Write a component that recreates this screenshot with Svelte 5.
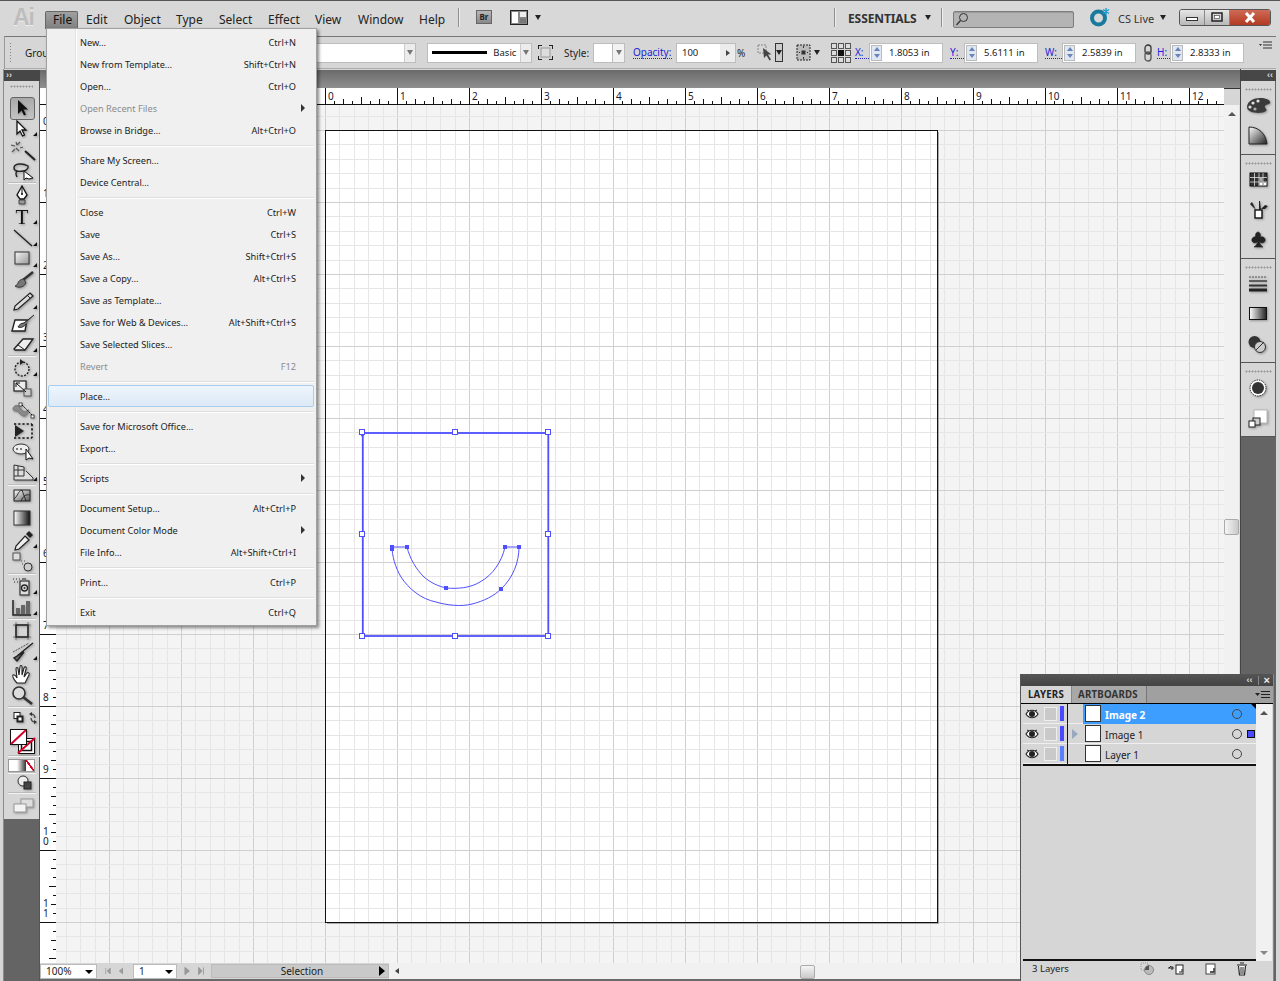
<script>
  const menuItems = [
    ['New…','Ctrl+N'],['New from Template…','Shift+Ctrl+N'],['Open…','Ctrl+O'],['Open Recent Files','',{dis:1,sub:1}],['Browse in Bridge…','Alt+Ctrl+O'],null,
    ['Share My Screen…',''],['Device Central…',''],null,
    ['Close','Ctrl+W'],['Save','Ctrl+S'],['Save As…','Shift+Ctrl+S'],['Save a Copy…','Alt+Ctrl+S'],['Save as Template…',''],['Save for Web & Devices…','Alt+Shift+Ctrl+S'],['Save Selected Slices…',''],['Revert','F12',{dis:1}],null,
    ['Place…','',{hl:1}],null,
    ['Save for Microsoft Office…',''],['Export…',''],null,
    ['Scripts','',{sub:1}],null,
    ['Document Setup…','Alt+Ctrl+P'],['Document Color Mode','',{sub:1}],['File Info…','Alt+Shift+Ctrl+I'],null,
    ['Print…','Ctrl+P'],null,
    ['Exit','Ctrl+Q']
  ];
  const menus = [['File',33],['Edit',38],['Object',52],['Type',43],['Select',49],['Effect',47],['View',43],['Window',61],['Help',41]];

  const tri = '<path d="M29 18h4v-4z" fill="#111"/>';
  const groups = [
    { cls:'g0', tools:[
      '<path d="M14 3v14l3.5-3.5 2.5 5 2-1-2.5-5H24z" fill="#111"/>',
      '<path d="M13 3v13l3-3 2.5 5 2-1-2.5-5H22z" fill="#fff" stroke="#111" stroke-width="1.3"/>'+tri,
      '<path d="M21 11l10 9" stroke="#222" stroke-width="2"/><path d="M12 2l1 3M19 7l-3 1M11 9l-3 3M7 5l4 1M16 2l-3 3M15 11l-3-3" stroke="#555" stroke-width="1.2"/>',
      '<path d="M24 5c-5-3-14-3-14 2 0 3 4 4 9 3 2 0 6-2 5-5zM13 10c-2 2-1 4 0 6" fill="none" stroke="#222" stroke-width="1.4"/><path d="M20 10v9l2-2 3 1 4-1z" fill="#fff" stroke="#111"/>'
    ]},
    { cls:'g1', tools:[
      '<path d="M18 1l5 9-3 4h-4l-3-4z" fill="#fff" stroke="#111" stroke-width="1.3"/><path d="M18 1v8" stroke="#111"/><circle cx="18" cy="9" r="1" fill="#111"/><path d="M15 15h6v4h-6z" fill="#999" stroke="#333" stroke-width=".8"/>',
      '<text x="18" y="18" text-anchor="middle" font-family="Liberation Serif" font-size="21" fill="#111">T</text>'+tri,
      '<path d="M10 2l18 16" stroke="#222" stroke-width="1.4"/>'+tri,
      '<defs><linearGradient id="rg" x1="0" y1="0" x2="1" y2="1"><stop offset="0" stop-color="#f5f5f5"/><stop offset="1" stop-color="#999"/></linearGradient></defs><rect x="11" y="3" width="14" height="12" fill="url(#rg)" stroke="#333"/>'+tri,
      '<path d="M29 2L19 10" stroke="#333" stroke-width="2.4"/><path d="M20 9c-4 0-6 3-6 4s-2 3-3 3c3 2 8 2 11-3z" fill="#777" stroke="#222" stroke-width=".8"/>',
      '<path d="M26 2l3 3-15 13-4 1 1-4z" fill="#ddd" stroke="#222" stroke-width="1.2"/><path d="M23 4l3 3" stroke="#222"/>'+tri,
      '<path d="M11 7h12l-2 11H8z" fill="#fff" stroke="#222" stroke-width="1.4"/><path d="M30 2L20 10c-3 0-5 2-6 4 3 1 6 0 8-3" fill="#777" stroke="#222"/>',
      '<path d="M10 15l9-10h10l-8 11H11z" fill="#eee" stroke="#222" stroke-width="1.3"/><path d="M14 11l7 5" stroke="#222"/>'+tri
    ]},
    { cls:'g2', tools:[
      '<circle cx="18" cy="11" r="7" fill="none" stroke="#222" stroke-width="1.4" stroke-dasharray="2 1.4"/><path d="M16 1l4 3-4 3z" fill="#222"/>'+tri,
      '<rect x="10" y="2" width="12" height="10" fill="#eee" stroke="#222" stroke-width="1.2"/><rect x="20" y="10" width="7" height="7" fill="#ccc" stroke="#555"/><path d="M12 4l10 9M12 4h4M12 4v4" stroke="#111" fill="none"/>',
      '<path d="M9 8c3-5 6-2 8 1s5 3 7 1-1 8-5 6-5-5-7-5-3 0-3-3z" fill="#888" stroke="#777"/><path d="M16 3l14 14" stroke="#111" stroke-dasharray="2 1"/><rect x="15" y="3" width="3" height="3" fill="#fff" stroke="#111" stroke-width=".7"/><rect x="27" y="15" width="3" height="3" fill="#fff" stroke="#111" stroke-width=".7"/>',
      '<path d="M10 3h18M10 17h18M28 3v14" stroke="#111" stroke-width="1.6" stroke-dasharray="2.2 2"/><path d="M11 4v12l9-6z" fill="#222"/>',
      '<ellipse cx="17" cy="7" rx="8" ry="5" fill="#eee" stroke="#333"/><circle cx="13" cy="7" r="1" fill="#555"/><circle cx="17" cy="7" r="1" fill="#555"/><path d="M22 7v11l3-2 4 1z" fill="#fff" stroke="#111"/>',
      '<path d="M10 2l10 2v9H10zM14 3v10M20 7H10M22 8l7 7v2H10v-4" fill="#ddd" stroke="#333"/>'+tri
    ]},
    { cls:'g3', tools:[
      '<defs><linearGradient id="mg" x1="0" y1="0" x2="1" y2="1"><stop offset="0" stop-color="#fff"/><stop offset="1" stop-color="#555"/></linearGradient></defs><rect x="10" y="3" width="16" height="11" fill="url(#mg)" stroke="#222"/><path d="M10 12c4-3 4-8 8-9M26 8c-4-1-7 1-9 6M18 3l4 11" stroke="#222" fill="none" stroke-width=".9"/>',
      '<defs><linearGradient id="gg"><stop offset="0" stop-color="#fff"/><stop offset="1" stop-color="#111"/></linearGradient></defs><rect x="10" y="2" width="16" height="14" fill="url(#gg)" stroke="#333"/>',
      '<path d="M25 1l4 4-3 3-4-4z" fill="#222"/><path d="M21 6l4 4-10 9-4 1 1-4z" fill="#eee" stroke="#222" stroke-width="1.2"/>'+tri,
      '<rect x="9" y="1" width="7" height="7" fill="#ddd" stroke="#555"/><path d="M17 9h1M20 9h1M18 12h1M21 12h1" stroke="#555"/><circle cx="24" cy="15" r="4" fill="#ccc" stroke="#333"/>'
    ]},
    { cls:'g4', tools:[
      '<path d="M9 3h1M12 3h1M15 3h1M10 6h1M13 6h1" stroke="#333"/><rect x="16" y="5" width="9" height="14" fill="#ddd" stroke="#333" stroke-width="1.2"/><rect x="18" y="2" width="4" height="3" fill="#777"/><circle cx="20.5" cy="12" r="3" fill="none" stroke="#222" stroke-width="1.3"/><circle cx="20.5" cy="12" r="1" fill="#333"/>'+tri,
      '<path d="M9 3v15h18" fill="none" stroke="#222" stroke-width="1.5"/><rect x="12" y="11" width="4" height="6" fill="#666"/><rect x="17" y="8" width="4" height="9" fill="#666"/><rect x="22" y="4" width="4" height="13" fill="#666"/>'+tri
    ]},
    { cls:'g5', tools:[
      '<rect x="12" y="4" width="12" height="12" fill="none" stroke="#222" stroke-width="1.6"/><path d="M9 4h2M25 4h2M9 16h2M25 16h2M12 1v2M24 1v2M12 17v2M24 17v2" stroke="#777"/>',
      '<path d="M29 1L13 14M20 10l-7 9-3-3z" fill="#666" stroke="#222" stroke-width="1.4"/><path d="M9 10l16-9" stroke="#555" stroke-dasharray="2 1"/>'+tri,
      '<path d="M13 19c-3-3-5-7-4-8s3 1 4 3l-1-9c0-2 2-2 2 0l1 6 1-8c0-2 2-2 2 0v8l2-7c1-2 3-1 2 1l-2 8 3-4c1-1 3 0 2 2l-4 8z" fill="#fff" stroke="#222" stroke-width="1.1"/>',
      '<circle cx="15" cy="8" r="6" fill="#ddd" stroke="#333" stroke-width="1.6"/><path d="M19 12l9 7" stroke="#333" stroke-width="2.6"/>'
    ]}
  ];

  const inch = 72;
  const hTicks = [], vTicks = [], hLabels = [], vLabels = [];
  for (let i = -4; i <= 13; i++) {
    if (i >= 0 && i <= 12) hLabels.push({ x: 325 + i * inch + 3, t: i });
    for (let s = 0; s < 8; s++) {
      const x = Math.round(325 + i * inch + s * 9) + .5;
      const len = s === 0 ? 17 : s === 4 ? 7 : s % 2 === 0 ? 5 : 3;
      if (x > 40 && x < 1224) hTicks.push({ x, len });
    }
  }
  for (let i = -1; i <= 12; i++) {
    if (i >= 0 && i <= 11) vLabels.push({ y: 130 + i * inch, t: String(i) });
    for (let s = 0; s < 8; s++) {
      const y = Math.round(130 + i * inch + s * 9) + .5;
      const len = s === 0 ? 16 : s === 4 ? 7 : s % 2 === 0 ? 5 : 3;
      if (y > 105 && y < 963) vTicks.push({ y, len });
    }
  }
  const gridV = [], gridH = [];
  for (let i = -19; i <= 62; i++) {
    gridV.push({ x: Math.round(325 + i * 14.4) + .5, major: i % 5 === 0 });
  }
  for (let i = -2; i <= 60; i++) {
    gridH.push({ y: Math.round(130 + i * 14.4) + .5, major: i % 5 === 0 });
  }
  const handles = [[362,432],[455,432],[548,432],[362,534],[548,534],[362,636],[455,636],[548,636]];
  const anchors = [[405,545],[444,586],[503,545],[517,545],[499,587]];

  const dockGroups = [
    { cls:'d0', icons:[
      '<path d="M3 11C3 5 10 2 16 2c6 0 11 2 10 5-1 2-4 1-5 3s3 3 1 5c-3 3-19 3-19-4z" fill="#3b3b3b"/><circle cx="9" cy="7" r="1.6" fill="#ddd"/><circle cx="14" cy="5" r="1.6" fill="#ddd"/><circle cx="6" cy="11" r="1.6" fill="#ddd"/><circle cx="11" cy="13" r="1.6" fill="#aaa"/>',
      '<defs><linearGradient id="cg" x1="0" y1="0" x2="1" y2="1"><stop offset="0" stop-color="#fff"/><stop offset="1" stop-color="#222"/></linearGradient></defs><path d="M5 1c10 0 17 7 18 17H5z" fill="url(#cg)" stroke="#222"/>'
    ]},
    { cls:'d1', icons:[
      '<rect x="6" y="3" width="17" height="13" fill="#333" stroke="#111"/><path d="M10.5 3v13M15 3v13M19 3v13M6 7.5h17M6 12h17" stroke="#ddd" stroke-width=".8"/><rect x="15.5" y="8" width="3" height="3.5" fill="#aaa"/><rect x="19.5" y="12.5" width="3" height="3" fill="#fff"/><rect x="15.5" y="12.5" width="3" height="3" fill="#fff"/>',
      '<rect x="11" y="10" width="7" height="8" fill="#fff" stroke="#111" stroke-width="1.4"/><path d="M12 10L8 2l-2 2 3 3zM15 10V1h1l1 9M17 9l4-4 3 1-3 3z" fill="#222"/>',
      '<path d="M14 9c-1-3-5-3-6 0-1 3 3 6 6 2-1 3-2 5-4 6h9c-2-1-3-3-4-6 3 4 7 1 6-2-1-3-5-3-6 0 3-3 1-7-1-7s-4 4-1 7z" fill="#222" stroke="#222" stroke-width=".6"/>'
    ]},
    { cls:'d2', icons:[
      '<path d="M5 3h18" stroke="#555" stroke-dasharray="2 1"/><path d="M5 7h18" stroke="#333" stroke-width="1.4"/><path d="M5 11.5h18" stroke="#333" stroke-width="2"/><path d="M5 16h18" stroke="#222" stroke-width="3"/>',
      '<defs><linearGradient id="dg"><stop offset="0" stop-color="#fff"/><stop offset="1" stop-color="#222"/></linearGradient></defs><rect x="5.5" y="3.5" width="17" height="12" fill="url(#dg)" stroke="#111"/>',
      '<circle cx="10.5" cy="8" r="6" fill="#333"/><circle cx="16" cy="13" r="5.5" fill="#ccc" stroke="#333"/><path d="M12 16l8-8" stroke="#333"/>'
    ]},
    { cls:'d3', icons:[
      '<circle cx="14" cy="10" r="8" fill="#fff" stroke="#222" stroke-dasharray="1.4 1"/><circle cx="14" cy="10" r="6" fill="#333"/>',
      '<rect x="10" y="2" width="13" height="13" fill="#fff" stroke="#bbb"/><rect x="9" y="10" width="7" height="7" fill="#ccc" stroke="#222"/><rect x="5" y="13" width="6" height="6" fill="#fff" stroke="#222"/>'
    ]}
  ];
  const layers = [
    { name:'Image 2', sel:true, bar:'#4a4aff', arrow:false },
    { name:'Image 1', sel:false, bar:'#4a4aff', arrow:true, sq:true },
    { name:'Layer 1', sel:false, bar:'#5a80ff', arrow:false }
  ];
  const fields = [
    { label:'X:', lw:14, val:'1.8053 in', gap:7 },
    { label:'Y:', lw:14, val:'5.6111 in', gap:7 },
    { label:'W:', lw:17, val:'2.5839 in', gap:8 }
  ];
</script>

<div class="window">
  <header class="titlebar">
    <span class="logo">Ai</span>
    <nav class="menubar">
      {#each menus as m, i}
        <span class="mitem" class:open={i === 0} style="width:{m[1]}px">{m[0]}</span>
      {/each}
    </nav>
    <i class="vsep sep1"></i>
    <span class="br">Br</span>
    <svg class="layout-ic" width="18" height="15" viewBox="0 0 18 15"><rect x=".5" y=".5" width="17" height="14" fill="#888" stroke="#222"/><rect x="2" y="2" width="6" height="11" fill="#fff"/><rect x="10" y="2" width="6" height="5" fill="#eee"/><rect x="10" y="8.500" width="6" height="4.500" fill="#777"/></svg>
    <i class="tri dark ml7"></i>
    <span class="spacer"></span>
    <i class="vsep"></i>
    <span class="essentials">ESSENTIALS</span>
    <i class="tri dark ml9"></i>
    <i class="vsep sep3"></i>
    <div class="search">
      <svg width="14" height="14" viewBox="0 0 14 14"><circle cx="8.500" cy="5.500" r="4" fill="none" stroke="#333"/><path d="M5.500 8.500L1.500 13" stroke="#333" stroke-width="1.200"/></svg>
    </div>
    <svg class="cslive-ic" width="20" height="20" viewBox="0 0 20 20"><circle cx="8.500" cy="11" r="6.500" fill="none" stroke="#1a7a9e" stroke-width="4"/><path d="M16 1v7M13 2.500l6 4M19 2.500l-6 4" stroke="#1a9ad0" stroke-width="1.300"/></svg>
    <span class="cslive">CS Live</span>
    <i class="tri dark ml6"></i>
    <div class="winbtns">
      <span class="wb"><svg width="12" height="8" viewBox="0 0 12 8"><rect x=".5" y="4.500" width="11" height="3" fill="#fff" stroke="#333"/></svg></span>
      <span class="wb"><svg width="12" height="10" viewBox="0 0 12 10"><rect x="1" y="1" width="10" height="8" fill="none" stroke="#222" stroke-width="1.500"/><rect x="3.500" y="3.500" width="5" height="3" fill="#fff" stroke="#333" stroke-width=".6"/></svg></span>
      <span class="wb close"><svg width="14" height="11" viewBox="0 0 14 11"><path d="M3 1l8 9M11 1l-8 9" stroke="#fff" stroke-width="3"/></svg></span>
    </div>
  </header>

  <div class="controlbar">
    <i class="grip"></i>
    <span class="grou">Group</span>
    <div class="field wide"><span class="selbtn"><i class="tri gray"></i></span></div>
    <div class="field stroke"><i class="strokeline"></i><span class="basic">Basic</span><span class="selbtn"><i class="tri gray"></i></span></div>
    <svg class="c-ic transform" width="15" height="15" viewBox="0 0 15 15"><rect x="3" y="3" width="9" height="9" fill="#ddd" stroke="#999"/><path d="M0 0h4v1H1v3H0zM11 0h4v4h-1V1h-3zM0 11h1v3h3v1H0zM14 11h1v4h-4v-1h3z" fill="#222"/></svg>
    <span class="lab style">Style:</span>
    <div class="field swatch"></div>
    <span class="selbtn solo"><i class="tri gray"></i></span>
    <span class="lab blue opacity">Opacity:</span>
    <div class="field opac"><span class="val">100</span><span class="opacbtn"><i class="rtri"></i></span></div>
    <span class="lab pct">%</span>
    <svg class="c-ic arrow-ic" width="18" height="20" viewBox="0 0 18 20"><path d="M1 2h8v8H1z" fill="none" stroke="#888" stroke-dasharray="2 1"/><path d="M6 5l1 10 2.500-2.500 3 5 1.500-1-3-5h3.500z" fill="#444"/></svg>
    <span class="dropbox"><i class="tri dark sm"></i></span>
    <svg class="c-ic dash-ic" width="15" height="17" viewBox="0 0 15 17"><rect x="1" y="1" width="13" height="15" fill="#bbb" stroke="#222" stroke-dasharray="2 1"/><rect x="5.500" y="6.500" width="4" height="4" fill="#333"/><path d="M7.500 2v2M7.500 13v2M3 8.500h1M11 8.500h1" stroke="#333"/></svg>
    <i class="tri dark sm ml3"></i>
    <svg class="c-ic ref-ic" width="20" height="20" viewBox="0 0 20 20"><g fill="#ddd" stroke="#555"><rect x=".5" y=".5" width="5" height="5"/><rect x="7.500" y=".5" width="5" height="5"/><rect x="14.500" y=".5" width="5" height="5"/><rect x=".5" y="7.500" width="5" height="5"/><rect x="14.500" y="7.500" width="5" height="5"/><rect x=".5" y="14.500" width="5" height="5"/><rect x="7.500" y="14.500" width="5" height="5"/><rect x="14.500" y="14.500" width="5" height="5"/></g><rect x="7" y="7" width="6" height="6" fill="#111"/></svg>
    {#each fields as f}
      <span class="lab blue xy" style="width:{f.lw}px">{f.label}</span>
      <div class="field num" style="margin-right:{f.gap}px"><span class="spin"><i></i><i class="dn"></i></span><span class="val">{f.val}</span></div>
    {/each}
    <svg class="c-ic link-ic" width="8" height="18" viewBox="0 0 8 18"><rect x="1" y="1" width="6" height="9" rx="3" fill="none" stroke="#333" stroke-width="1.300"/><rect x="1" y="8" width="6" height="9" rx="3" fill="none" stroke="#555" stroke-width="1.300"/></svg>
    <span class="lab blue xy hlab">H:</span>
    <div class="field num"><span class="spin"><i></i><i class="dn"></i></span><span class="val">2.8333 in</span></div>
    <svg class="c-ic panelmenu" width="13" height="10" viewBox="0 0 13 10"><path d="M0 3h3L1.500 5z" fill="#333"/><path d="M4 1h9M4 4h9M4 7h9" stroke="#333"/></svg>
  </div>

  <div class="workspace">
    <aside class="leftdock">
      <div class="dockhead"><span class="chev">››</span></div>
      <div class="toolbar">
        <i class="dotgrip"></i>
        {#each groups as g, gi}
          <div class="tgroup {g.cls}">
            {#each g.tools as t, ti}
              <div class="tool" class:active={gi === 0 && ti === 0}>
                <svg width="36" height="21" viewBox="0 0 36 21">{@html t}</svg>
              </div>
            {/each}
          </div>
          <i class="tsep"></i>
        {/each}
        <svg class="colors" width="36" height="17" viewBox="0 0 36 17"><rect x="10" y="1.500" width="6" height="6" fill="#fff" stroke="#222"/><rect x="13" y="5" width="6" height="6" fill="#222" stroke="#222"/><rect x="14.500" y="6.500" width="3" height="3" fill="#fff"/><path d="M27 3a4 4 0 0 1 4 4M31 11a4 4 0 0 1-4-4" fill="none" stroke="#333" stroke-width="1.200"/><path d="M25 3l3-2v4zM33 11l-3 2V9z" fill="#333"/></svg>
        <svg class="fillstroke" width="36" height="26" viewBox="0 0 36 26">
          <rect x="14.500" y="10.500" width="16" height="15" fill="#fff" stroke="#111"/><rect x="17.500" y="13.500" width="10" height="9" fill="#fff" stroke="#111" stroke-width="1.500"/><path d="M14 25L31 10" stroke="#d4002a" stroke-width="2"/>
          <rect x="6.500" y="1.500" width="16" height="15" fill="#fff" stroke="#111"/><path d="M7 16L22 2" stroke="#d4002a" stroke-width="2"/>
        </svg>
        <i class="tsep wide"></i>
        <div class="modes"><i class="m1"></i><i class="m2"></i><i class="m3"></i></div>
        <i class="tsep tight"></i>
        <svg class="drawmode" width="36" height="16" viewBox="0 0 36 16"><circle cx="19" cy="6" r="5" fill="#eee" stroke="#333"/><rect x="20" y="7" width="7" height="7" fill="#444" stroke="#222"/></svg>
        <i class="tsep tight sepdraw"></i>
        <svg class="screenmode" width="36" height="18" viewBox="0 0 36 18"><rect x="17" y="2" width="12" height="8" fill="#ddd" stroke="#999"/><rect x="10" y="7" width="12" height="8" fill="#f4f4f4" stroke="#999"/></svg>
      </div>
      <div class="deadzone"></div>
    </aside>

    <main class="center">
      <div class="tabstrip"></div>
      <div class="hruler">
        <svg width="1184" height="17" viewBox="40 0 1184 17">
          {#each hTicks as t}<line x1={t.x} x2={t.x} y1={16 - t.len} y2="16" stroke="#111"/>{/each}
          <line x1="40" x2="1224" y1="16.500" y2="16.500" stroke="#111"/>
          {#each hLabels as l}<text x={l.x} y="12" class="rtext">{l.t}</text>{/each}
        </svg>
      </div>
      <div class="canvasrow">
        <div class="vruler">
          <svg width="16" height="858" viewBox="40 105 16 858">
            {#each vTicks as t}<line x1={56 - t.len} x2="56" y1={t.y} y2={t.y} stroke="#111"/>{/each}
            {#each vLabels as l}
              {#if l.t.length === 1}
                <text x="43" y={l.y - 5} class="rtext">{l.t}</text>
              {:else}
                <text class="rtext"><tspan x="43" y={l.y - 15}>{l.t[0]}</tspan><tspan x="43" y={l.y - 5}>{l.t[1]}</tspan></text>
              {/if}
            {/each}
          </svg>
        </div>
        <div class="canvas">
          <svg width="1168" height="858" viewBox="56 105 1168 858">
            <rect x="56" y="105" width="1168" height="858" fill="#f4f4f4"/>
            <rect x="325" y="130" width="613" height="792" fill="#fff"/>
            {#each gridV as g}<line x1={g.x} x2={g.x} y1="105" y2="963" stroke={g.major ? '#cfcfcf' : '#e6e6e6'}/>{/each}
            {#each gridH as g}<line x1="56" x2="1224" y1={g.y} y2={g.y} stroke={g.major ? '#cfcfcf' : '#e6e6e6'}/>{/each}
            <rect x="325.500" y="130.500" width="612" height="792" fill="none" stroke="#111"/>
            <path d="M327 923.500h612M938.500 132v792" stroke="#aaa" fill="none"/>
            <rect x="362.800" y="433" width="185.500" height="203" fill="none" stroke="#4f4fff" stroke-width="1.800"/>
            <path d="M392 547h15M505 547h14" stroke="#4f4fff" fill="none"/>
            <path d="M392 547c0 8 3 20 9 30 8 12 20 22 35 25 10 3 25 5 36 2 12-3 22-8 29-15 12-11 18-27 18-42" fill="none" stroke="#4f4fff"/>
            <path d="M407 547c3 12 9 22 17 30 7 6 14 9 22 11 12 1 24 0 34-6 13-7 22-21 25-35" fill="none" stroke="#4f4fff"/>
            <rect x="390" y="545" width="4" height="6" fill="#4f4fff"/>
            {#each anchors as a}<rect x={a[0]} y={a[1]} width="4" height="4" fill="#4f4fff"/>{/each}
            <path d="M360 434h5l-2.500 3.500z" fill="#4f4fff"/>
            {#each handles as h}<rect x={h[0] - 2.500} y={h[1] - 2.500} width="5" height="5" fill="#fff" stroke="#4f4fff"/>{/each}
          </svg>
        </div>
        <div class="vscroll">
          <i class="uptri"></i>
          <i class="thumb"></i>
        </div>
      </div>
      <footer class="status">
        <span class="sbox zoombox"><span>100%</span><i class="tri blk"></i></span>
        <span class="navs n1"><svg width="24" height="10" viewBox="0 0 24 10"><path d="M1 1v8M7 1L3 5l4 4zM24 1l-5 4 5 4z" fill="#999" stroke="#999"/></svg></span>
        <span class="sbox pagebox"><span>1</span><i class="tri blk"></i></span>
        <span class="navs n2"><svg width="22" height="10" viewBox="0 0 22 10"><path d="M1 1l5 4-5 4zM16 1l4 4-4 4zM21.500 1v8" fill="#999" stroke="#999"/></svg></span>
        <span class="selection">Selection<i class="blkarrow"></i></span>
        <div class="hscroll"><i class="ltri"></i><i class="hthumb"></i></div>
      </footer>
    </main>

    <aside class="rightdock">
      <div class="dockhead right"><span class="chev">‹‹</span></div>
      {#each dockGroups as d}
        <div class="dgroup {d.cls}">
          <i class="dotgrip"></i>
          {#each d.icons as ic}
            <div class="dicon"><svg width="28" height="20" viewBox="0 0 28 20">{@html ic}</svg></div>
          {/each}
        </div>
      {/each}
      <div class="dockrest"></div>
    </aside>
  </div>

  <!-- File menu, overlays the workspace -->
  <div class="menu">
    <i class="gutter"></i>
    {#each menuItems as it}
      {#if it === null}
        <div class="msep"></div>
      {:else}
        <div class="mrow" class:dis={it[2]?.dis} class:hl={it[2]?.hl}>
          <span>{it[0]}</span>
          <span class="sc">{it[1]}</span>
          {#if it[2]?.sub}<i class="subarrow"></i>{/if}
        </div>
      {/if}
    {/each}
  </div>

  <!-- Floating layers panel -->
  <section class="layers">
    <div class="lhead"><span class="chev small">‹‹</span><i class="lbar"></i><span class="x">×</span></div>
    <div class="ltabs">
      <span class="ltab on">LAYERS</span>
      <span class="ltab">ARTBOARDS</span>
      <svg class="lmenu" width="15" height="8" viewBox="0 0 15 8"><path d="M0 2h5L2.500 5z" fill="#222"/><path d="M6 .5h9M6 3.500h9M6 6.500h9" stroke="#222"/></svg>
    </div>
    <div class="lbody">
      <div class="llist">
        <div class="rows">
          {#each layers as l}
            <div class="lrow">
              <svg class="eye" width="14" height="12" viewBox="0 0 14 12"><path d="M1 6c3-5 9-5 12 0-3 5-9 5-12 0z" fill="#fff" stroke="#222" stroke-width="1.200"/><circle cx="7" cy="6" r="3" fill="#222"/><path d="M2 2l2 1M12 2l-2 1" stroke="#222"/></svg>
              <i class="lockbox"></i>
              <i class="lcolor" style="background:{l.bar}"></i>
              <i class="ldiv"></i>
              <span class="exp">{#if l.arrow}<i class="hollow"></i>{/if}</span>
              <div class="lmain" class:sel={l.sel}>
                <i class="thumbnail"></i>
                <span class="lname">{l.name}</span>
                <i class="target"></i>
                {#if l.sq}<i class="selsq"></i>{/if}
              </div>
            </div>
          {/each}
        </div>
        <div class="lempty"></div>
      </div>
      <div class="lscroll"><i class="uptri"></i><i class="dntri"></i></div>
    </div>
    <div class="lfoot">
      <span class="count">3 Layers</span>
      <svg class="f1" width="15" height="13" viewBox="0 0 15 13"><rect x="1" y="1" width="7" height="7" fill="none" stroke="#999" stroke-dasharray="1 1"/><circle cx="9" cy="8" r="4.500" fill="#bbb" stroke="#888"/><path d="M9 8V3.500A4.500 4.500 0 0 0 5 8z" fill="#555"/></svg>
      <svg class="f2" width="16" height="12" viewBox="0 0 16 12"><path d="M0 5h6M4 3v4M3 3L1 5" stroke="#222" fill="none"/><rect x="8" y="2" width="7" height="9" fill="#fff" stroke="#222"/><path d="M11 9h3V6" stroke="#222" fill="none"/></svg>
      <svg class="f3" width="11" height="12" viewBox="0 0 11 12"><rect x="1" y="1" width="9" height="10" fill="#fff" stroke="#444"/><path d="M5 9h4V5" stroke="#222" fill="none" stroke-width="1.300"/></svg>
      <svg class="f4" width="12" height="14" viewBox="0 0 12 14"><path d="M1 3h10M4 1h4M2.500 4l1 9h5l1-9" fill="#fff" stroke="#222" stroke-width="1.200"/><path d="M5 5v7M7 5v7" stroke="#222"/></svg>
    </div>
  </section>
</div>

<style>
  :global(body) { margin: 0; background: #646464; }
  * { box-sizing: border-box; }
  i { display: block; font-style: normal; }
  .window {
    position: relative; width: 1280px; height: 981px; overflow: hidden;
    display: flex; flex-direction: column;
    font-family: "Noto Sans", "Open Sans", sans-serif; color: #1c1c1c;
    background: #d6d6d6;
  }
  .titlebar {
    height: 36px; flex: none; display: flex; align-items: center;
    background: #d8d8d8; border-top: 1px solid #555; padding-left: 13px; padding-bottom: 3px;
  }
  .logo { width: 20px; font: bold 23px "Liberation Sans", sans-serif; color: #bdbdbd; letter-spacing: -1px; text-shadow: 0 1px 0 #eee; }
  .menubar { display: flex; margin-left: 12px; height: 18px; }
  .mitem { font-size: 12px; line-height: 18px; padding-left: 8px; white-space: nowrap; color: #222; margin-top: 3px; }
  .mitem.open { background: linear-gradient(#a0a0a0, #7f7f7f); border: 1px solid #666; border-bottom: 0; border-radius: 2px 2px 0 0; padding-left: 7px; height: 18px; line-height: 16px; color: #111; margin-top: 3px; }
  .vsep { width: 1px; height: 19px; background: #8f8f8f; border-right: 1px solid #eee; box-sizing: content-box; }
  .sep1 { margin-left: 6px; }
  .br { margin-left: 16px; width: 16px; height: 14px; background: linear-gradient(#b8b8b8, #888); border: 1px solid #666; font: bold 8px/12px "Noto Sans", sans-serif; text-align: center; color: #222; }
  .layout-ic { margin-left: 18px; }
  .tri { width: 0; height: 0; border-style: solid; border-width: 5px 3.5px 0; border-color: #333 transparent transparent; flex: none; }
  .tri.dark { border-top-color: #222; }
  .tri.gray { border-top-color: #777; }
  .tri.blk { border-top-color: #000; border-width: 4px 4px 0; }
  .tri.sm { border-width: 5px 3px 0; }
  .ml7 { margin-left: 7px; } .ml9 { margin-left: 9px; } .ml6 { margin-left: 6px; } .ml3 { margin-left: 3px; }
  .spacer { flex: 1; }
  .essentials { margin-left: 12px; margin-top: 2px; width: 68px; font: bold 12px "Noto Sans", sans-serif; color: #333; white-space: nowrap; letter-spacing: -.1px; }
  .sep3 { margin-left: 10px; }
  .search { margin-left: 10px; width: 121px; height: 17px; margin-top: 4px; background: #b4b4b4; border: 1px solid #7d7d7d; border-radius: 2px; box-shadow: inset 0 1px 1px #999; padding-left: 1px; display: flex; align-items: center; }
  .cslive-ic { margin-left: 16px; }
  .cslive { margin-left: 8px; margin-top: 2px; width: 36px; font-size: 11px; white-space: nowrap; color: #333; }
  .winbtns { margin-left: 13px; margin-right: 9px; width: 92px; height: 17px; display: flex; border: 1px solid #555; border-radius: 3px; overflow: hidden; }
  .wb { width: 25px; display: flex; align-items: center; justify-content: center; background: linear-gradient(#e6e6e6, #b8b8b8); border-right: 1px solid #888; }
  .wb.close { flex: 1; width: auto; background: linear-gradient(#cf6a56, #b23a22); border: 0; }

  .controlbar {
    height: 33px; flex: none; display: flex; align-items: center;
    margin: 0 4px 0 4px; background: #d6d6d6;
    border-top: 1px solid #777; border-bottom: 1px solid #aaa; border-left: 1px solid #999; padding-left: 4px; position: relative;
  }
  .grip { width: 3px; height: 22px; flex: none; background-image: radial-gradient(#888 40%, transparent 45%); background-size: 3px 3px; }
  .grou { margin-left: 13px; font-size: 10px; width: 100px; flex: none; white-space: nowrap; }
  .field { height: 20px; background: #fff; border: 1px solid #bdbdbd; display: flex; align-items: center; font-size: 9.5px; flex: none; position: relative; }
  .wide { width: 292px; margin-left: -1px; justify-content: flex-end; }
  .selbtn { width: 11px; height: 18px; background: #ececec; border-left: 1px solid #ccc; display: flex; align-items: center; justify-content: center; flex: none; }
  .selbtn.solo { width: 12px; height: 20px; border: 1px solid #bdbdbd; border-left: 0; background: #f2f2f2; }
  .stroke { width: 105px; margin-left: 11px; }
  .strokeline { width: 56px; height: 3px; background: #000; margin-left: 4px; }
  .basic { margin-left: 6px; width: 27px; }
  .c-ic { flex: none; }
  .transform { margin-left: 6px; }
  .lab { flex: none; font-size: 10px; white-space: nowrap; color: #222; }
  .style { margin-left: 11px; width: 29px; }
  .swatch { width: 20px; }
  .blue { color: #2323d8; border-bottom: 1px dotted #2323d8; line-height: 11px; }
  .opacity { margin-left: 8px; width: 39px; }
  .opac { width: 60px; margin-left: 4px; }
  .val { padding-left: 5px; }
  .opacbtn { margin-left: auto; width: 15px; height: 18px; background: #ececec; display: flex; align-items: center; justify-content: center; }
  .rtri { width: 0; height: 0; border-style: solid; border-width: 3.5px 0 3.5px 4px; border-color: transparent transparent transparent #444; }
  .pct { margin-left: 1px; width: 10px; }
  .arrow-ic { margin-left: 10px; }
  .dropbox { width: 8px; height: 19px; border: 1px solid #333; background: #ccc; display: flex; align-items: center; justify-content: center; margin-left: 0; flex: none; }
  .dash-ic { margin-left: 13px; }
  .ref-ic { margin-left: 11px; margin-right: 4px; }
  .xy { width: 14px; }
  .num { width: 74px; }
  .spin { width: 11px; height: 16px; margin-left: 1px; background: #dfe7f2; border: 1px solid #bbb; display: flex; flex-direction: column; justify-content: space-around; align-items: center; flex: none; }
  .spin i { width: 0; height: 0; border-style: solid; border-width: 0 3px 4px; border-color: transparent transparent #6a84b8; }
  .spin i.dn { border-width: 4px 3px 0; border-color: #6a84b8 transparent transparent; }
  .num .val { padding-left: 7px; }
  .link-ic { margin-left: 0; }
  .hlab { margin-left: 5px; width: 13px; }
  .panelmenu { margin: -14px 0 0 15px; }

  .workspace { flex: 1; display: flex; min-height: 0; background: #d6d6d6; padding-left: 4px; }
  .leftdock { width: 36px; flex: none; display: flex; flex-direction: column; box-shadow: -1px 0 0 #8a8a8a; }
  .dockhead { height: 11px; background: #474747; display: flex; align-items: center; padding-left: 2px; flex: none; margin-top: 1px; }
  .chev { color: #ddd; font: bold 9px/9px "Liberation Sans", sans-serif; }
  .toolbar { height: 738px; flex: none; display: flex; flex-direction: column; background: #d6d6d6; border-right: 1px solid #555; position: relative; padding-top: 3px; }
  .dotgrip { height: 3px; margin: 1px 6px 0; flex: none; background-image: radial-gradient(#999 45%, transparent 50%); background-size: 3px 3px; }
  .tgroup { display: flex; flex-direction: column; flex: none; }
  .tool { flex: 1; min-height: 0; display: flex; align-items: center; }
  .tool svg, .colors, .fillstroke, .drawmode, .screenmode { filter: drop-shadow(1px 1px 1px rgba(0,0,0,.3)); flex: none; overflow: visible; }
  .tool.active { position: relative; }
  .tool.active::before { content: ""; position: absolute; left: 6px; top: 0; width: 23px; height: 21px; border: 1px solid #666; border-radius: 3px; background: linear-gradient(#a9a9a9, #c4c4c4); }
  .tool.active svg { position: relative; }
  .g0 { height: 85px; margin-top: 9px; }
  .g1 { height: 170px; }
  .g2 { height: 126px; }
  .g3 { height: 86px; }
  .g4 { height: 42px; }
  .g5 { height: 85px; }
  .tsep { height: 1px; flex: none; margin: 1px 3px 1px 4px; background: #f4f4f4; box-shadow: 0 -1px 0 #bcbcbc; }
  .tsep.wide { margin: 2px 3px 2px 4px; }
  .tsep.tight { margin: 0 3px 0 4px; }
  .tsep.sepdraw { margin-top: 2px; }
  .colors { margin-top: 2px; }
  .modes { height: 13px; margin: 0 3px 1px 4px; display: flex; border: 1px solid #999; flex: none; width: 27px; }
  .modes i { flex: 1; }
  .m1 { background: #fff; }
  .m2 { background: linear-gradient(90deg, #fff, #333); }
  .m3 { background: linear-gradient(to top right, #fff 42%, #d4002a 44%, #d4002a 56%, #fff 58%); }
  .drawmode { margin-top: 1px; }
  .screenmode { margin-top: 3px; }
  .deadzone { flex: 1; background: #646464; border-right: 1px solid #555; }

  .center { flex: 1; min-width: 0; display: flex; flex-direction: column; }
  .tabstrip { height: 19px; flex: none; margin-top: 1px; background: linear-gradient(#6a6a6a, #8f8f8f); border-bottom: 1px solid #333; }
  .hruler { height: 17px; flex: none; background: #fff; margin-right: 16px; margin-top: -1px; }
  .hruler svg, .vruler svg, .canvas svg { display: block; }
  .rtext { font: 10px "Noto Sans", sans-serif; fill: #1a1a2a; }
  .canvasrow { flex: 1; display: flex; min-height: 0; position: relative; }
  .vruler { width: 16px; flex: none; background: #fff; }
  .canvas { flex: 1; min-width: 0; overflow: hidden; }
  .vscroll { width: 16px; flex: none; background: #f1f1f1; position: relative; border-right: 1px solid #ddd; }
  .uptri { position: absolute; left: 4px; top: 7px; width: 0; height: 0; border-style: solid; border-width: 0 4px 4px; border-color: transparent transparent #555; }
  .thumb { position: absolute; left: 0; top: 414px; width: 15px; height: 16px; background: linear-gradient(90deg, #f5f5f5, #c9c9c9); border: 1px solid #aaa; border-radius: 2px; }
  .status { height: 18px; flex: none; display: flex; align-items: center; background: #d6d6d6; border-bottom: 2px solid #6a6a6a; font-size: 10px; }
  .sbox { height: 15px; background: #fff; border: 1px solid #bbb; display: flex; align-items: center; justify-content: space-between; padding: 1px 3px 0 5px; flex: none; line-height: 13px; }
  .zoombox { width: 57px; }
  .pagebox { width: 44px; }
  .navs { display: flex; flex: none; align-items: center; }
  .n1 { margin: 0 10px 0 8px; width: 18px; overflow: visible; }
  .n2 { margin: 0 7px 0 7px; width: 20px; }
  .selection { width: 178px; height: 14px; background: #c9c9c9; border: 1px solid #bbb; text-align: center; line-height: 13px; position: relative; padding-left: 4px; flex: none; }
  .blkarrow { position: absolute; right: 3px; top: 1px; width: 0; height: 0; border-style: solid; border-width: 5px 0 5px 6px; border-color: transparent transparent transparent #000; }
  .hscroll { flex: 1; height: 16px; background: #f1f1f1; position: relative; }
  .ltri { position: absolute; left: 6px; top: 5px; width: 0; height: 0; border-style: solid; border-width: 3px 4px 3px 0; border-color: transparent #444 transparent transparent; }
  .hthumb { position: absolute; left: 411px; top: 2px; width: 15px; height: 14px; background: linear-gradient(#f5f5f5, #c9c9c9); border: 1px solid #aaa; border-radius: 2px; }

  .rightdock { width: 40px; flex: none; display: flex; flex-direction: column; background: #d6d6d6; border-left: 1px solid #444; padding-right: 4px; box-sizing: border-box; }
  .dockhead.right { margin-top: 1px; justify-content: flex-end; padding-right: 3px; }
  .dgroup { flex: none; border-bottom: 1px solid #555; padding-top: 7px; display: flex; flex-direction: column; border-right: 1px solid #666; }
  .dgroup .dotgrip { margin: 0 3px 0 4px; }
  .dicon { height: 30px; display: flex; align-items: center; justify-content: center; padding-right: 1px; }
  .dicon svg { filter: drop-shadow(1px 1px 1px rgba(0,0,0,.3)); }
  .d0 { height: 74px; } .d1, .d2 { height: 104px; } .d3 { height: 74px; }
  .dockrest { flex: 1; background: #646464; border-right: 1px solid #666; }

  .menu {
    position: absolute; left: 46px; top: 28px; width: 271px; height: 598px;
    background: #f0f0f0; border: 1px solid #a0a0a0; padding: 2px 2px 0 1px;
    box-shadow: 2px 2px 3px rgba(0,0,0,.45); font-size: 9.2px; color: #1c1c1c;
  }
  .gutter { position: absolute; left: 28px; top: 0; bottom: 0; width: 2px; background: #e2e2e2; border-right: 1px solid #fff; }
  .mrow { height: 22px; display: flex; align-items: center; justify-content: space-between; padding: 0 17px 0 31px; position: relative; border: 1px solid transparent; }
  .mrow.dis { color: #8c8c8c; }
  .mrow.hl { background: linear-gradient(#eef5fc, #dce9f6); border-color: #a9cdee; border-radius: 2px; }
  .msep { height: 8px; position: relative; }
  .msep::after { content: ""; position: absolute; left: 31px; right: 0; top: 4px; height: 1px; background: #dedede; box-shadow: 0 1px 0 #fff; }
  .subarrow { position: absolute; right: 8px; top: 6px; width: 0; height: 0; border-style: solid; border-width: 4px 0 4px 4px; border-color: transparent transparent transparent #333; }

  .layers { position: absolute; left: 1021px; top: 674px; width: 253px; height: 307px; display: flex; flex-direction: column; background: #d6d6d6; box-shadow: -1px 0 0 #555; border-right: 1px solid #888; }
  .lhead { height: 12px; flex: none; background: linear-gradient(#555, #444); display: flex; align-items: center; justify-content: flex-end; gap: 5px; padding-right: 3px; color: #ddd; }
  .chev.small { font-size: 9px; }
  .lbar { width: 1px; height: 9px; background: #888; }
  .x { font: bold 11px/11px "Liberation Sans", sans-serif; color: #eee; }
  .ltabs { height: 18px; flex: none; background: #a0a0a0; display: flex; align-items: stretch; position: relative; border-bottom: 1px solid #000; }
  .ltab { font: bold 9.7px/18px "Noto Sans", sans-serif; padding-left: 6px; background: #a8a8a8; color: #333; width: 75px; border-right: 1px solid #777; letter-spacing: .2px; }
  .ltab.on { background: #d6d6d6; width: 51px; padding-left: 7px; color: #222; border-right: 1px solid #888; }
  .lmenu { position: absolute; right: 3px; top: 5px; }
  .lbody { flex: 1; min-height: 0; display: flex; padding: 0 1px 0 2px; }
  .llist { flex: 1; min-width: 0; display: flex; flex-direction: column; border-bottom: 2px solid #111; }
  .rows { flex: none; border-bottom: 2px solid #111; }
  .lrow { height: 20px; display: flex; align-items: center; border-bottom: 1px solid #efefef; }
  .lempty { flex: 1; }
  .eye { margin-left: 2px; flex: none; }
  .lockbox { width: 13px; height: 14px; margin-left: 5px; border: 1px solid #eee; background: #c9c9c9; flex: none; }
  .lcolor { width: 4px; height: 15px; margin-left: 3px; flex: none; }
  .ldiv { width: 1px; height: 20px; background: #111; margin-left: 3px; flex: none; }
  .exp { width: 15px; flex: none; padding-left: 4px; }
  .hollow { width: 0; height: 0; border-style: solid; border-width: 5.5px 0 5.500px 6px; border-color: transparent transparent transparent #98a8c0; }
  .lmain { flex: 1; height: 20px; display: flex; align-items: center; position: relative; padding-left: 2px; font-size: 10px; color: #1c1c1c; }
  .lmain.sel { background: #3d9eff; color: #fff; font-weight: bold; }
  .lmain.sel::after { content: ""; position: absolute; right: 0; top: 0; border-style: solid; border-color: transparent #000 transparent transparent; border-width: 0 5px 5px 0; }
  .thumbnail { width: 16px; height: 17px; background: #fff; border: 1px solid #333; flex: none; }
  .lname { margin-left: 4px; margin-top: 2px; }
  .target { position: absolute; left: 149px; top: 5px; width: 10px; height: 10px; border: 1.5px solid #444; border-radius: 50%; }
  .selsq { position: absolute; left: 164px; top: 6px; width: 8px; height: 8px; background: #4a4aff; border: 1px solid #111; }
  .lscroll { width: 16px; flex: none; background: #f1f1f1; position: relative; }
  .lscroll .uptri { top: 7px; left: 4px; }
  .dntri { position: absolute; left: 4px; bottom: 6px; width: 0; height: 0; border-style: solid; border-width: 4px 4px 0; border-color: #888 transparent transparent; }
  .lfoot { height: 20px; flex: none; position: relative; font-size: 9.5px; display: flex; align-items: center; padding-left: 11px; }
  .count { width: 116px; margin-top: -5px; }
  .f1 { position: absolute; left: 119px; top: 1px; }
  .f2 { position: absolute; left: 147px; top: 2px; }
  .f3 { position: absolute; left: 184px; top: 2px; }
  .f4 { position: absolute; left: 215px; top: 1px; }
</style>
